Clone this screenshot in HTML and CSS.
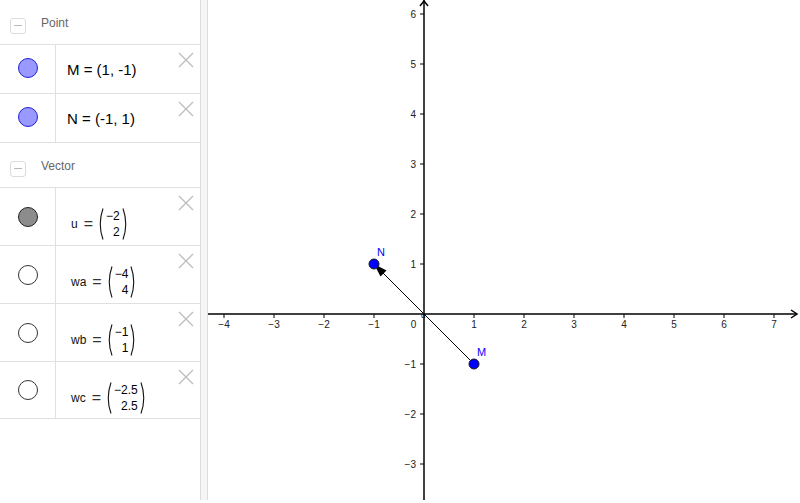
FILE: index.html
```html
<!DOCTYPE html>
<html>
<head>
<meta charset="utf-8">
<link rel="stylesheet" href="styles.css">
</head>
<body>
<div class="app">
  <aside class="algebra">
    <div class="group-head">
      <span class="toggle"></span><span class="group-title">Point</span>
    </div>
    <div class="item item-point">
      <div class="marble-cell"><span class="marble marble-point"></span></div>
      <div class="formula formula-point">M = (1, -1)</div>
      <svg class="close" viewBox="0 0 16 16"><path d="M1 1L15 15M15 1L1 15"/></svg>
    </div>
    <div class="item item-point item-last">
      <div class="marble-cell"><span class="marble marble-point"></span></div>
      <div class="formula formula-point">N = (-1, 1)</div>
      <svg class="close" viewBox="0 0 16 16"><path d="M1 1L15 15M15 1L1 15"/></svg>
    </div>

    <div class="group-head">
      <span class="toggle"></span><span class="group-title">Vector</span>
    </div>
    <div class="item item-vector">
      <div class="marble-cell"><span class="marble marble-shown"></span></div>
      <div class="formula formula-vector">
        <span class="name">u</span><span class="eq">=</span>
        <span class="matrix">
          <svg class="paren" viewBox="0 0 7 32"><path d="M6 0.5Q0.5 16 6 31.5"/></svg>
          <span class="entries"><span>−2</span><span>2</span></span>
          <svg class="paren" viewBox="0 0 7 32"><path d="M1 0.5Q6.5 16 1 31.5"/></svg>
        </span>
      </div>
      <svg class="close" viewBox="0 0 16 16"><path d="M1 1L15 15M15 1L1 15"/></svg>
    </div>
    <div class="item item-vector">
      <div class="marble-cell"><span class="marble"></span></div>
      <div class="formula formula-vector">
        <span class="name">wa</span><span class="eq">=</span>
        <span class="matrix">
          <svg class="paren" viewBox="0 0 7 32"><path d="M6 0.5Q0.5 16 6 31.5"/></svg>
          <span class="entries"><span>−4</span><span>4</span></span>
          <svg class="paren" viewBox="0 0 7 32"><path d="M1 0.5Q6.5 16 1 31.5"/></svg>
        </span>
      </div>
      <svg class="close" viewBox="0 0 16 16"><path d="M1 1L15 15M15 1L1 15"/></svg>
    </div>
    <div class="item item-vector">
      <div class="marble-cell"><span class="marble"></span></div>
      <div class="formula formula-vector">
        <span class="name">wb</span><span class="eq">=</span>
        <span class="matrix">
          <svg class="paren" viewBox="0 0 7 32"><path d="M6 0.5Q0.5 16 6 31.5"/></svg>
          <span class="entries"><span>−1</span><span>1</span></span>
          <svg class="paren" viewBox="0 0 7 32"><path d="M1 0.5Q6.5 16 1 31.5"/></svg>
        </span>
      </div>
      <svg class="close" viewBox="0 0 16 16"><path d="M1 1L15 15M15 1L1 15"/></svg>
    </div>
    <div class="item item-vector item-last">
      <div class="marble-cell"><span class="marble"></span></div>
      <div class="formula formula-vector">
        <span class="name">wc</span><span class="eq">=</span>
        <span class="matrix">
          <svg class="paren" viewBox="0 0 7 32"><path d="M6 0.5Q0.5 16 6 31.5"/></svg>
          <span class="entries"><span>−2.5</span><span>2.5</span></span>
          <svg class="paren" viewBox="0 0 7 32"><path d="M1 0.5Q6.5 16 1 31.5"/></svg>
        </span>
      </div>
      <svg class="close" viewBox="0 0 16 16"><path d="M1 1L15 15M15 1L1 15"/></svg>
    </div>
  </aside>

  <div class="splitter"></div>

  <main class="graphics">
    <svg class="plot" viewBox="208 0 592 500" width="592" height="500">
      <g class="axes">
        <line x1="208" y1="314" x2="797" y2="314"/>
        <polyline points="791,310 797,314 791,318" fill="none"/>
        <line x1="424" y1="0" x2="424" y2="500"/>
        <polyline points="420,6 424,1 428,6" fill="none"/>
      </g>
      <g class="ticks">
        <line x1="224" y1="314" x2="224" y2="318"/>
        <line x1="274" y1="314" x2="274" y2="318"/>
        <line x1="324" y1="314" x2="324" y2="318"/>
        <line x1="374" y1="314" x2="374" y2="318"/>
        <line x1="474" y1="314" x2="474" y2="318"/>
        <line x1="524" y1="314" x2="524" y2="318"/>
        <line x1="574" y1="314" x2="574" y2="318"/>
        <line x1="624" y1="314" x2="624" y2="318"/>
        <line x1="674" y1="314" x2="674" y2="318"/>
        <line x1="724" y1="314" x2="724" y2="318"/>
        <line x1="774" y1="314" x2="774" y2="318"/>
        <line x1="420" y1="14" x2="424" y2="14"/>
        <line x1="420" y1="64" x2="424" y2="64"/>
        <line x1="420" y1="114" x2="424" y2="114"/>
        <line x1="420" y1="164" x2="424" y2="164"/>
        <line x1="420" y1="214" x2="424" y2="214"/>
        <line x1="420" y1="264" x2="424" y2="264"/>
        <line x1="420" y1="364" x2="424" y2="364"/>
        <line x1="420" y1="414" x2="424" y2="414"/>
        <line x1="420" y1="464" x2="424" y2="464"/>
      </g>
      <g class="xlabels">
        <text x="224" y="328">−4</text>
        <text x="274" y="328">−3</text>
        <text x="324" y="328">−2</text>
        <text x="374" y="328">−1</text>
        <text x="413.5" y="328">0</text>
        <text x="474" y="328">1</text>
        <text x="524" y="328">2</text>
        <text x="574" y="328">3</text>
        <text x="624" y="328">4</text>
        <text x="674" y="328">5</text>
        <text x="724" y="328">6</text>
        <text x="774" y="328">7</text>
      </g>
      <g class="ylabels">
        <text x="416" y="18">6</text>
        <text x="416" y="68">5</text>
        <text x="416" y="118">4</text>
        <text x="416" y="168">3</text>
        <text x="416" y="218">2</text>
        <text x="416" y="268">1</text>
        <text x="416" y="368">−1</text>
        <text x="416" y="418">−2</text>
        <text x="416" y="468">−3</text>
      </g>
      <line class="vec" x1="474" y1="364" x2="380" y2="270"/>
      <polygon class="vec-head" points="374,264 386.5,270.5 380.5,276.5"/>
      <text class="vec-label" x="421" y="318">u</text>
      <circle class="pt" cx="374" cy="264" r="5"/>
      <circle class="pt" cx="474" cy="364" r="5"/>
      <text class="pt-label" x="377" y="256">N</text>
      <text class="pt-label" x="477" y="356">M</text>
    </svg>
  </main>
</div>
</body>
</html>
```

FILE: styles.css
```css
html, body {
  margin: 0;
  padding: 0;
  background: #ffffff;
}

body {
  font-family: "Liberation Sans", Arial, sans-serif;
  color: #000;
}

.app {
  display: flex;
  width: 800px;
  height: 500px;
}

.algebra {
  width: 200px;
  flex: none;
  background: #fff;
}

.group-head {
  height: 44px;
  display: flex;
  align-items: center;
  box-sizing: border-box;
  padding-left: 10px;
  padding-top: 2px;
}

.toggle {
  width: 16px;
  height: 16px;
  border: 1px solid #dcdcdc;
  border-radius: 3px;
  box-sizing: border-box;
  position: relative;
  margin-top: 6px;
}

.toggle::after {
  content: "";
  position: absolute;
  left: 3px;
  right: 3px;
  top: 6px;
  height: 1px;
  background: #b8b8b8;
}

.group-title {
  margin-left: 15px;
  font-size: 12px;
  color: #666;
  margin-top: 0;
}

.item {
  display: flex;
  position: relative;
  border-top: 1px solid #e0e0e0;
  box-sizing: border-box;
}

.item-point {
  height: 49px;
}

.item-vector {
  height: 58px;
}

.item-point.item-last {
  height: 50px;
  border-bottom: 1px solid #e0e0e0;
}

.item-vector.item-last {
  height: 58px;
  border-bottom: 1px solid #e0e0e0;
}

.marble-cell {
  width: 56px;
  flex: none;
  border-right: 1px solid #e0e0e0;
  display: flex;
  align-items: center;
  padding-left: 18px;
  box-sizing: border-box;
}

.marble {
  width: 20px;
  height: 20px;
  border-radius: 50%;
  box-sizing: border-box;
  border: 1px solid #333;
  background: #fff;
}

.marble-point {
  background: #9999ff;
  border-color: #2020d8;
  margin-bottom: 3px;
}

.marble-shown {
  background: #8c8c8c;
  border-color: #222;
}

.formula {
  display: flex;
  align-items: center;
  padding-left: 11px;
}

.formula-point {
  font-size: 15px;
  padding-left: 11px;
}

.formula-vector {
  padding-top: 15px;
  padding-left: 15px;
  font-size: 12px;
}

.item-vector .name {
  font-size: 12px;
  color: #111;
}

.item-vector .eq {
  margin: 0 4px 0 6px;
  font-size: 16px;
  color: #333;
}

.matrix {
  display: inline-flex;
  align-items: center;
}

.paren {
  width: 7px;
  height: 32px;
  flex: none;
}

.paren path {
  fill: none;
  stroke: #111;
  stroke-width: 1.1;
}

.entries {
  display: flex;
  flex-direction: column;
  align-items: flex-end;
  line-height: 16px;
  font-size: 12px;
  padding: 0 2px 0 2px;
}

.close {
  position: absolute;
  right: 6px;
  top: 7px;
  width: 16px;
  height: 16px;
}

.close path {
  stroke: #bcbcbc;
  stroke-width: 1.3;
  fill: none;
}

.splitter {
  width: 8px;
  flex: none;
  box-sizing: border-box;
  background: #f5f5f5;
  border-left: 1px solid #dcdcdc;
  border-right: 1px solid #dcdcdc;
}

.graphics {
  flex: 1;
  overflow: hidden;
}

.plot {
  display: block;
}

.axes line,
.axes polyline {
  stroke: #000;
  stroke-width: 1.5;
}

.ticks line {
  stroke: #000;
  stroke-width: 1;
}

.xlabels text,
.ylabels text {
  font-family: "Liberation Sans", Arial, sans-serif;
  font-size: 10px;
  fill: #222;
}

.xlabels text {
  text-anchor: middle;
}

.ylabels text {
  text-anchor: end;
}

.vec {
  stroke: #000;
  stroke-width: 1;
}

.vec-head {
  fill: #000;
}

.vec-label {
  font-family: "Liberation Sans", Arial, sans-serif;
  font-size: 8px;
  fill: #000;
}

.pt {
  fill: #0000ff;
  stroke: #1a1a1a;
  stroke-width: 1;
}

.pt-label {
  font-family: "Liberation Sans", Arial, sans-serif;
  font-size: 11px;
  fill: #0000ff;
}
```
